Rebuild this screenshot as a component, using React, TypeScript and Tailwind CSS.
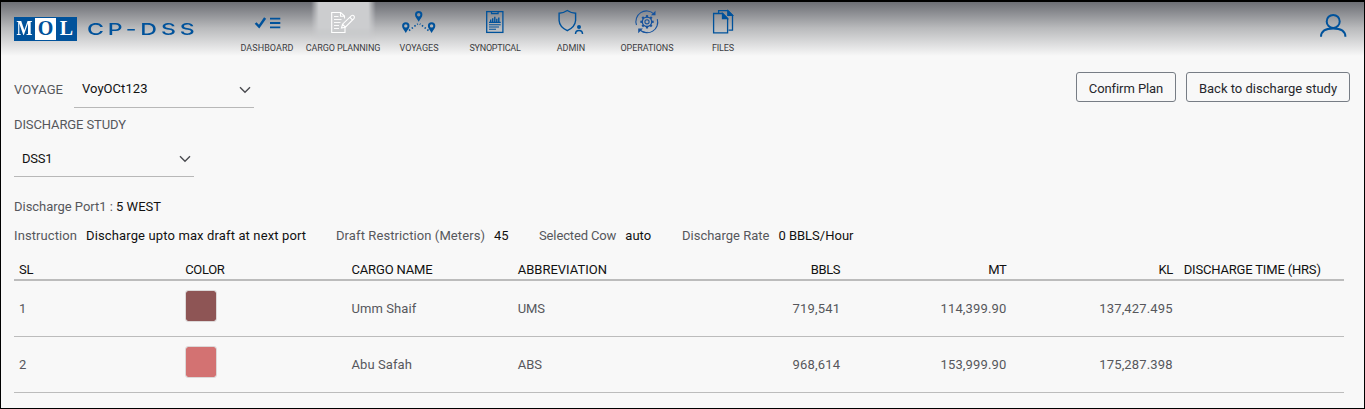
import type { ReactNode } from "react";

type NavItem = { label: string; track: string; box: string; icon: ReactNode; active?: boolean };

const gearTeeth = [0, 45, 90, 135, 180, 225, 270, 315];

function Pin({ x, y }: { x: number; y: number }) {
  return (
    <path
      transform={`translate(${x} ${y})`}
      fillRule="evenodd"
      d="M0 -3.6a3.7 3.7 0 0 1 3.7 3.7c0 2.3-2.2 4.2-3.7 7c-1.5-2.8-3.7-4.7-3.7-7a3.7 3.7 0 0 1 3.7-3.7ZM0 -1.6a1.7 1.7 0 1 0 0 3.4a1.7 1.7 0 0 0 0-3.4Z"
      fill="#00529b"
    />
  );
}

const nav: NavItem[] = [
  {
    label: "DASHBOARD",
    track: "tracking-[0.06px]",
    box: "229 2 76 38",
    icon: (
      <>
        <path d="M255.6 23l3.5 3.6l6-8.6" stroke="#00529b" strokeWidth="2.5" fill="none" />
        <path d="M270 18.7h10.3M270 23h10.3M270 27.3h10.3" stroke="#00529b" strokeWidth="1.8" />
      </>
    ),
  },
  {
    label: "CARGO PLANNING",
    track: "tracking-[-0.12px]",
    box: "305 2 76 38",
    active: true,
    icon: (
      <g stroke="#fff" fill="none" strokeWidth="1.1">
        <path d="M344.5 18.5v-2.5l-3.8-3.5h-9v20h13.3v-6.5M340.5 12.5v3.8h4" />
        <path d="M334 16.5h4.5M334 19.5h7.5M334 22.5h6.5M334 25.5h5M334 28.5h5" strokeWidth=".9" />
        <path d="M341.5 28l1-3.8l9-8.6q1.3-.8 2.4.3q1 1.2.2 2.4l-8.8 8.9ZM342.5 24.2l2.8 3M349.8 17.2l2.8 3" />
      </g>
    ),
  },
  {
    label: "VOYAGES",
    track: "tracking-normal",
    box: "381 2 76 38",
    icon: (
      <>
        <Pin x={418.7} y={14.6} />
        <Pin x={405.8} y={25.8} />
        <Pin x={431.6} y={25.8} />
        <path d="M409 30.5L417.8 23.8M428.5 30.5L419.8 23.8" stroke="#00529b" strokeWidth="1.6" strokeDasharray="1.5 1.9" />
      </>
    ),
  },
  {
    label: "SYNOPTICAL",
    track: "tracking-[-0.24px]",
    box: "457 2 76 38",
    icon: (
      <g stroke="#00529b" fill="none">
        <rect x="486.7" y="11.6" width="16.2" height="20.8" strokeWidth="1.3" />
        <path d="M491.5 11.5v2.2h6.6v-2.2" strokeWidth="1.2" />
        <path d="M490.7 22v-2.5M492.7 22v-3.8M494.8 22v-5.3M496.8 22v-3.3M498.8 22v-4.6" strokeWidth="1.4" />
        <path d="M489 22.4h11.7M489 24.7h11.7M489 27h10M489 29.3h7" strokeWidth="1.1" />
      </g>
    ),
  },
  {
    label: "ADMIN",
    track: "tracking-normal",
    box: "533 2 76 38",
    icon: (
      <g stroke="#00529b" fill="none">
        <path d="M567.3 10.5q4 2.6 8.3 2.7v7.3q-.5 6.5-8.3 10.2q-7.8-3.7-8.2-10.2v-7.3q4.2-.1 8.200-2.7Z" strokeWidth="1.4" />
        <circle cx="579" cy="26.9" r="2" fill="#00529b" stroke="none" />
        <path d="M575.5 34q0-3.500 3.500-3.500t3.500 3.500" strokeWidth="1.5" />
      </g>
    ),
  },
  {
    label: "OPERATIONS",
    track: "tracking-[-0.06px]",
    box: "609 2 76 38",
    icon: (
      <g stroke="#17539d" fill="none">
        <path d="M636.5 25A10.6 10.6 0 0 1 653.8 13.8M657.3 19.2A10.6 10.6 0 0 1 640 30" strokeWidth="1.1" />
        <path d="M643 31.800A10.600 10.600 0 0 0 647.500 32.400" strokeWidth="1.100" />
        <path d="M655.500 10.800v4.500h-4.600ZM638.200 33.200v-4.700h4.700Z" fill="#17539d" stroke="none" />
        <circle cx="647" cy="21.8" r="2.100" strokeWidth="1.1" />
        <circle cx="647" cy="21.8" r="4.700" strokeWidth="1.3" />
        {gearTeeth.map((a) => (
          <path key={a} d="M647 17.300v-2.200" strokeWidth="2.200" transform={`rotate(${a} 647 21.8)`} />
        ))}
      </g>
    ),
  },
  {
    label: "FILES",
    track: "tracking-[-0.15px]",
    box: "685 2 76 38",
    icon: (
      <g stroke="#00529b" fill="none" strokeWidth="1.3">
        <path d="M718.6 13v-2.3h9.200l4.700 4.600v14.900h-4" />
        <path d="M713.6 13.5h9l5 5v14.300h-14Z" />
        <path d="M722.5 13.5l5 5h-5ZM727.8 10.700l4.700 4.600h-4.700Z" fill="#00529b" />
      </g>
    ),
  },
];

function Header() {
  return (
    <header className="flex h-[54px] bg-linear-to-b from-[#6d6f75] via-[#b9babc] via-48% to-[#f8f8f8]">
      <div className="flex w-[228px] shrink-0 pt-[15px] pl-[13px]">
        <div className="flex h-6 w-[63px] items-center bg-[#00529b] font-['Liberation_Serif'] text-[20px] leading-[23px] font-bold text-white">
          <span className="flex h-full w-[21px] justify-center">
            <span className="inline-block origin-center scale-x-[0.85]">M</span>
          </span>
          <span className="my-px h-[22px] w-[21px] bg-white text-center leading-[21px] text-[#00529b]">O</span>
          <span className="h-full w-[21px] text-center">L</span>
        </div>
        <span className="ml-[10px] inline-block h-6 origin-left scale-x-[1.4] font-[Inter] text-[16.5px] leading-6 font-medium tracking-[2.8px] whitespace-nowrap text-[#00529b]">
          CP-DSS
        </span>
      </div>
      <nav className="flex">
        {nav.map((n) => (
          <div key={n.label} className="relative flex w-[76px] flex-col items-center">
            {n.active && (
              <div className="absolute top-0 left-[6px] h-[42px] w-[65px] bg-[#cccdcf] [mask-composite:intersect] [mask-image:linear-gradient(90deg,transparent,#000_12%,#000_88%,transparent),linear-gradient(#000_60%,transparent)]" />
            )}
            <svg viewBox={n.box} className="relative h-[38px] w-[76px] shrink-0">
              {n.icon}
            </svg>
            <span className={`relative text-[9px] leading-4 whitespace-nowrap text-[#3c3d42] ${n.track}`}>{n.label}</span>
          </div>
        ))}
      </nav>
      <svg viewBox="0 0 28 26" className="mt-[11px] mr-[17px] ml-auto h-[26px] w-7" fill="none" stroke="#00529b" strokeWidth="2">
        <circle cx="14.2" cy="8.4" r="6.500" />
        <path d="M2 23.700q0-8.300 12.200-8.300t12.200 8.300" />
      </svg>
    </header>
  );
}

function Select({ value, track }: { value: string; track: string }) {
  return (
    <div className="flex h-[37px] w-[180px] items-center justify-between border-b border-[#b8b8b8] pr-[3px] pl-2">
      <span className={`text-[#111] ${track}`}>{value}</span>
      <svg viewBox="0 0 12 8" className="mt-px h-2 w-3" fill="none" stroke="#4a4b50" strokeWidth="1.4">
        <path d="M1 1.300l5 5l5-5" />
      </svg>
    </div>
  );
}

const fields = [
  { label: "Instruction", lt: "tracking-[0.09px]", value: "Discharge upto max draft at next port", vt: "tracking-[0.13px]", w: "w-[322px]" },
  { label: "Draft Restriction (Meters)", lt: "tracking-[0.09px]", value: "45", vt: "tracking-[-0.1px]", w: "w-[203px]" },
  { label: "Selected Cow", lt: "tracking-[-0.13px]", value: "auto", vt: "tracking-[0.05px]", w: "w-[143px]" },
  { label: "Discharge Rate", lt: "tracking-normal", value: "0 BBLS/Hour", vt: "tracking-normal", w: "w-auto" },
];

const heads = [
  { t: "SL", c: "tracking-[-0.3px]" },
  { t: "COLOR", c: "tracking-[-0.35px]" },
  { t: "CARGO NAME", c: "tracking-[-0.16px]" },
  { t: "ABBREVIATION", c: "tracking-normal" },
  { t: "BBLS", c: "text-right tracking-[-0.35px]" },
  { t: "MT", c: "text-right tracking-[-0.3px]" },
  { t: "KL", c: "text-right tracking-[-0.4px]" },
  { t: "DISCHARGE TIME (HRS)", c: "pl-[6px] tracking-[-0.18px]" },
];

const rows = [
  { sl: 1, color: "bg-[#8e5555]", name: "Umm Shaif", abbr: "UMS", bbls: "719,541", mt: "114,399.90", kl: "137,427.495" },
  { sl: 2, color: "bg-[#d37272]", name: "Abu Safah", abbr: "ABS", bbls: "968,614", mt: "153,999.90", kl: "175,287.398" },
];

export default function App() {
  return (
    <div className="h-[409px] w-[1365px] overflow-hidden border border-t-2 border-black bg-[#f8f8f8] font-[Roboto,sans-serif] text-[13px] leading-5 text-[#56575c]">
      <Header />
      <main className="pr-[14px] pl-[13px]">
        <div className="flex h-[52px] items-start justify-between pt-[15px]">
          <div className="flex">
            <span className="mt-[9px] w-[60px] tracking-[0.04px]">VOYAGE</span>
            <Select value="VoyOCt123" track="tracking-[0.05px]" />
          </div>
          <div className="flex gap-[10px] pt-px text-[#26272c]">
            <button className="h-[30px] w-[100px] rounded-[3px] border border-[#777d85] pt-[3px] tracking-[-0.08px]">Confirm Plan</button>
            <button className="h-[30px] w-[164px] rounded-[3px] border border-[#777d85] pt-[3px]">Back to discharge study</button>
          </div>
        </div>
        <div className="mt-[7px] leading-5 tracking-[-0.11px]">DISCHARGE STUDY</div>
        <div className="mt-[5px]">
          <Select value="DSS1" track="tracking-[-0.2px] pt-[2px]" />
        </div>
        <div className="mt-5 tracking-[-0.03px]">
          Discharge Port1 : <span className="tracking-[0.02px] text-[#111]">5 WEST</span>
        </div>
        <div className="mt-[9px] flex">
          {fields.map((f) => (
            <div key={f.label} className={`flex gap-[9px] whitespace-nowrap ${f.w}`}>
              <span className={f.lt}>{f.label}</span>
              <span className={`text-[#111] ${f.vt}`}>{f.value}</span>
            </div>
          ))}
        </div>
        <div className="mt-[13px] w-[1330px]">
          <div className="grid h-[22px] grid-cols-8 border-b-2 border-[#bcbcbc] pt-px text-[#111]">
            {heads.map((h) => (
              <div key={h.t} className={`px-[5px] whitespace-nowrap ${h.c}`}>
                {h.t}
              </div>
            ))}
          </div>
          {rows.map((r) => (
            <div key={r.sl} className="grid h-14 grid-cols-8 items-center border-b border-[#bcbcbc] *:px-[5px]">
              <div>{r.sl}</div>
              <div>
                <div className={`-mt-[5px] size-[32px] rounded-[3px] border border-[#dcd8d8] bg-clip-padding ${r.color}`} />
              </div>
              <div className="tracking-[0.08px]">{r.name}</div>
              <div className="tracking-[-0.1px]">{r.abbr}</div>
              <div className="text-right tracking-[0.2px]">{r.bbls}</div>
              <div className="text-right tracking-[0.16px]">{r.mt}</div>
              <div className="text-right tracking-[0.16px]">{r.kl}</div>
              <div />
            </div>
          ))}
        </div>
      </main>
    </div>
  );
}
